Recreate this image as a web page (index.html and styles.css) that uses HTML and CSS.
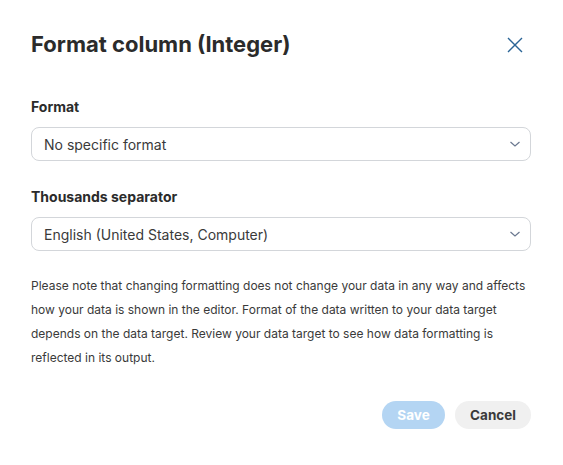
FILE: index.html
```html
<!DOCTYPE html>
<html lang="en">
<head>
  <meta charset="UTF-8">
  <meta name="viewport" content="width=device-width, initial-scale=1.0">
  <title>Format column</title>
  <link rel="stylesheet" href="styles.css">
</head>
<body>
  <div class="dialog">
    <div class="dialog-head">
      <h1 class="dialog-title">Format column (Integer)</h1>
      <button class="close" type="button" aria-label="Close">
        <svg width="16" height="16" viewBox="0 0 16 16">
          <path d="M1 1L15 15M15 1L1 15" stroke="#2a6496" stroke-width="1.4" fill="none"/>
        </svg>
      </button>
    </div>

    <div class="field field-format">
      <label class="field-label">Format</label>
      <div class="select">
        <span>No specific format</span>
        <svg class="chevron" width="10" height="6" viewBox="0 0 10 6">
          <path d="M0.5 1L5 5L9.5 1" stroke="#6a7890" stroke-width="1.2" fill="none"/>
        </svg>
      </div>
    </div>

    <div class="field field-sep">
      <label class="field-label">Thousands separator</label>
      <div class="select">
        <span>English (United States, Computer)</span>
        <svg class="chevron" width="10" height="6" viewBox="0 0 10 6">
          <path d="M0.5 1L5 5L9.5 1" stroke="#6a7890" stroke-width="1.2" fill="none"/>
        </svg>
      </div>
    </div>

    <p class="note">Please note that changing formatting does not change your data in any way and affects how your data is shown in the editor. Format of the data written to your data target depends on the data target. Review your data target to see how data formatting is reflected in its output.</p>

    <div class="actions">
      <button class="btn btn-save" type="button" disabled>Save</button>
      <button class="btn btn-cancel" type="button">Cancel</button>
    </div>
  </div>
</body>
</html>
```

FILE: styles.css
```css
* { margin: 0; padding: 0; box-sizing: border-box; }
body { background: #fff; font-family: Inter, "Noto Sans", sans-serif; color: #2e2e2e; }
.dialog { width: 563px; padding: 30px 32px 0 31px; }

.dialog-head { display: flex; justify-content: space-between; align-items: center; }
.dialog-title { font-size: 22px; line-height: 28px; font-weight: 700; color: #2b2b2b; }
.close { border: 0; background: none; width: 16px; height: 16px; margin-right: 8px; margin-top: 2px; display: flex; }

.field-format { margin-top: 39px; }
.field-sep { margin-top: 26px; }
.field-label { display: block; font-size: 14px; line-height: 20px; font-weight: 700; color: #2b2b2b; margin-bottom: 10px; }

.select { height: 34px; border: 1px solid #d3d6da; border-radius: 8px; padding: 0 10px 0 12px; display: flex; align-items: center; justify-content: space-between; font-size: 14px; color: #3a3a3a; }

.note { margin-top: 23px; font-size: 12px; line-height: 24px; color: #3a3a3a; }

.actions { margin-top: 31px; display: flex; justify-content: flex-end; gap: 10px; }
.btn { height: 28px; border: 0; border-radius: 14px; font-family: inherit; font-size: 13.5px; font-weight: 700; }
.btn-save { width: 63px; background: #b4d5f3; color: #fff; }
.btn-cancel { width: 76px; background: #f0f0f0; color: #3a3a3a; }
```
